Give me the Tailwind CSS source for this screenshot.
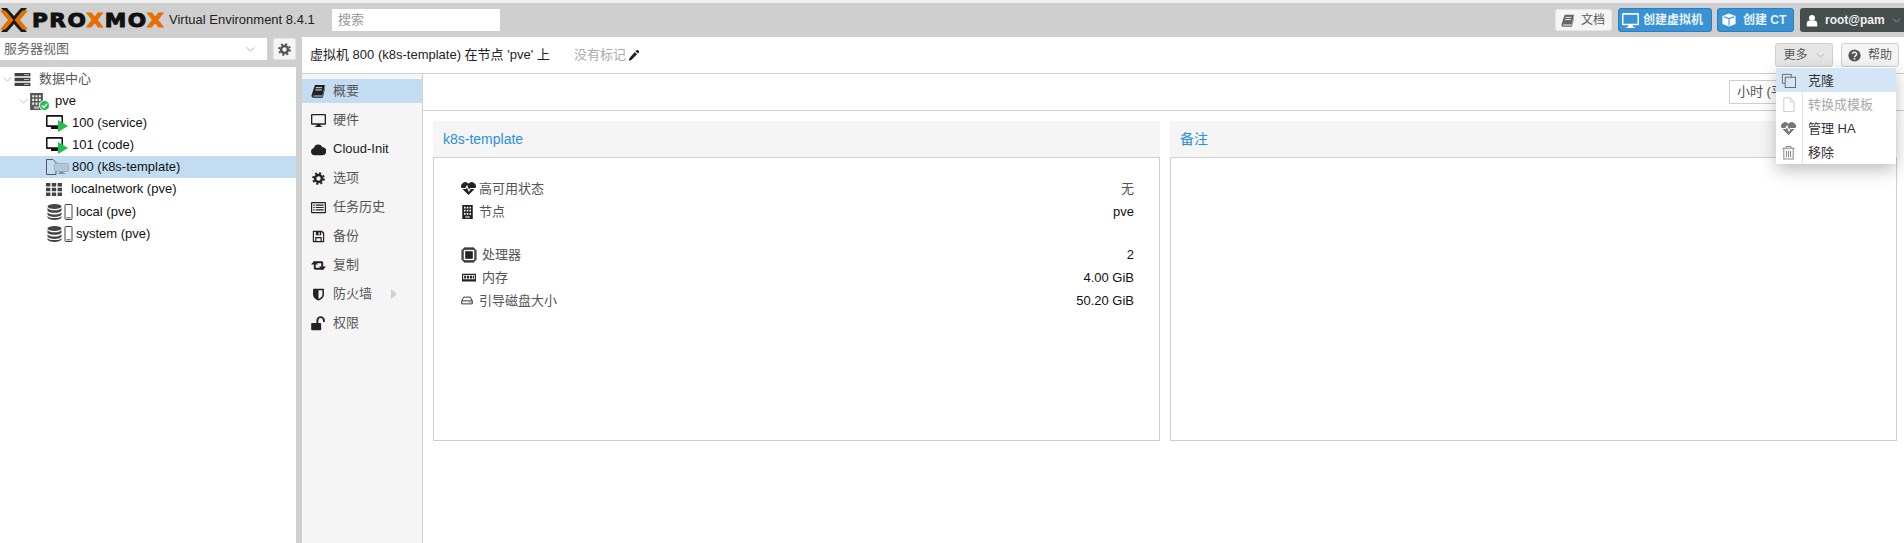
<!DOCTYPE html>
<html lang="zh-CN">
<head>
<meta charset="UTF-8" />
<title>pve - Proxmox Virtual Environment</title>
<script src="https://cdn.jsdelivr.net/npm/@tailwindcss/browser@4"></script>
</head>
<body class="w-[1904px] h-[543px] overflow-hidden bg-white text-[13px] text-[#111] font-['Liberation_Sans','Noto_Sans_CJK_SC',sans-serif]">

<!-- icon sheet -->
<svg class="hidden" xmlns="http://www.w3.org/2000/svg">
  <symbol id="i-chev" viewBox="0 0 10 6"><path d="M0.5 0.5 5 5 9.5 0.5" fill="none" stroke="currentColor" stroke-width="0.9"/></symbol>
  <symbol id="i-cog" viewBox="0 0 16 16"><circle cx="8" cy="8" r="4.2" fill="none" stroke="currentColor" stroke-width="3"/><circle cx="8" cy="8" r="6.6" fill="none" stroke="currentColor" stroke-width="2.4" stroke-dasharray="2.6 2.58"/></symbol>
  <symbol id="i-book" viewBox="0 0 16 16"><path d="M4.5 1H16l-3 12H3.200c-.9 0-1 .9-.3 1.200h10l3-10.400.4.800-3 11H2.600C1 15.600.2 14 .7 12.500z" fill="currentColor"/><path d="M5.500 4.200h7M5 6.800h7" stroke="#fff" stroke-width="1"/></symbol>
  <symbol id="i-desktop" viewBox="0 0 16 16"><path fill-rule="evenodd" d="M1 1h14a1 1 0 0 1 1 1v9.500a1 1 0 0 1-1 1H10l.4 1.500h1.600v1H4v-1h1.600l.4-1.500H1a1 1 0 0 1-1-1V2a1 1 0 0 1 1-1zM1.400 2.500v8.500h13.200V2.500z" fill="currentColor"/></symbol>
  <symbol id="i-cloud" viewBox="0 0 16 16"><path d="M4 14a3.900 3.900 0 0 1-.9-7.700A4.800 4.800 0 0 1 12 5.200a3.200 3.200 0 0 1 1 .5A4.200 4.200 0 0 1 12.500 14z" fill="currentColor"/></symbol>
  <symbol id="i-list" viewBox="0 0 16 16"><path fill-rule="evenodd" d="M1 2h14a1 1 0 0 1 1 1v10a1 1 0 0 1-1 1H1a1 1 0 0 1-1-1V3a1 1 0 0 1 1-1zM1.300 3.500v9.200h13.400V3.500z" fill="currentColor"/><path d="M2.500 5.500h1.500M5 5.500h8.500M2.500 8h1.500M5 8h8.500M2.500 10.500h1.500M5 10.500h8.500" stroke="currentColor" stroke-width="1.300"/></symbol>
  <symbol id="i-save" viewBox="0 0 16 16"><path fill-rule="evenodd" d="M1.500 1h11l2.500 2.500V14.500a.5.5 0 0 1-.5.5H1.500a.5.5 0 0 1-.5-.5V1.500a.5.5 0 0 1 .5-.5zM2.500 2.500v11h1.500V8.500h8v5h1.500V4.500L11.500 2.500h-.2v4H4.700v-4zM5.500 10v3.500h5V10zM8 3v2.500h1.800V3z" fill="currentColor"/></symbol>
  <symbol id="i-retweet" viewBox="0 0 16 16"><path d="M3.500 3 7.500 7H5v3.500h6.500l2 2H4.500A1.500 1.500 0 0 1 3 11V7H0zM12.500 13 8.500 9H11V5.500H4.500l-2-2h9A1.500 1.500 0 0 1 13 5v4h3z" fill="currentColor"/></symbol>
  <symbol id="i-shield" viewBox="0 0 16 16"><path fill-rule="evenodd" d="M2 1h12a.7.700 0 0 1 .7 .7v6.500c0 3.800-4.200 6.300-6.700 7.300-2.500-1-6.700-3.500-6.700-7.300V1.700A.7.700 0 0 1 2 1zM8 2.800v10.700c2-.9 4.800-2.900 4.800-5.300V2.800z" fill="currentColor"/></symbol>
  <symbol id="i-unlock" viewBox="0 0 16 16"><path d="M1 7.500h9a.8.800 0 0 1 .8.800v6a.8.800 0 0 1-.8.800H1a.8.800 0 0 1-.8-.8v-6A.8.800 0 0 1 1 7.500z" fill="currentColor"/><path d="M6.800 7.500V4.700a3.500 3.500 0 0 1 7 0v1.800" fill="none" stroke="currentColor" stroke-width="2"/></symbol>
  <symbol id="i-heart" viewBox="0 0 16 16"><path d="M8 15 1 8A4.300 4.300 0 0 1 8 3 4.300 4.300 0 0 1 15 8z" fill="currentColor"/><path d="M0 8h5l1.400-2.500 2 5 1.500-2.500H16" fill="none" stroke="#fff" stroke-width="1.200"/></symbol>
  <symbol id="i-node" viewBox="0 0 12 16"><path fill-rule="evenodd" d="M0 0h12v16H0zM2 2v2h1.800V2zM5.100 2v2h1.800V2zM8.200 2v2H10V2zM2 5.500v2h1.800v-2zM5.100 5.500v2h1.800v-2zM8.200 5.500v2H10v-2zM2 9v2h1.800V9zM5.100 9v2h1.800V9zM8.200 9v2H10V9z" fill="currentColor"/><path d="M3.500 12.500h5V15h-5z" fill="#fff" opacity=".55"/></symbol>
  <symbol id="i-cpu" viewBox="0 0 16 16"><rect x="2" y="2" width="12" height="12" rx="1" fill="#fff" stroke="currentColor" stroke-width="1.300"/><rect x="4.200" y="4.200" width="7.600" height="7.600" fill="currentColor"/><path d="M4 0v2M6 0v2M8 0v2M10 0v2M12 0v2M4 14v2M6 14v2M8 14v2M10 14v2M12 14v2M0 4h2M0 6h2M0 8h2M0 10h2M0 12h2M14 4h2M14 6h2M14 8h2M14 10h2M14 12h2" stroke="currentColor" stroke-width="1.100"/></symbol>
  <symbol id="i-mem" viewBox="0 0 16 16"><path fill-rule="evenodd" d="M0 3h16v9H0zM1.300 4.500V9.500h13.400V4.500z" fill="currentColor"/><path d="M2.500 5.500h2.300v3H2.500zM5.800 5.500h2.300v3H5.800zM9.100 5.500h2.300v3H9.100zM12.300 5.500h1.500v3h-1.500zM2 10.500h12V11H2z" fill="currentColor"/></symbol>
  <symbol id="i-hdd" viewBox="0 0 16 16"><path d="M3.500 3.500h9l2.500 5v4H1v-4zM1 8.500h14" fill="none" stroke="currentColor" stroke-width="1.200"/><path d="M10.500 10.500h1M12.700 10.500h1" stroke="currentColor" stroke-width="1"/></symbol>
  <symbol id="i-clone" viewBox="0 0 16 16"><path d="M11 4.500V1.500H1.500V11h3" fill="none" stroke="currentColor" stroke-width="1"/><rect x="4.500" y="4.500" width="11" height="11" fill="none" stroke="currentColor" stroke-width="1"/></symbol>
  <symbol id="i-file" viewBox="0 0 16 16"><path d="M3 1h7l4 4v10.500H3zM10 1v4h4" fill="none" stroke="currentColor" stroke-width="1"/></symbol>
  <symbol id="i-trash" viewBox="0 0 16 16"><path d="M1.500 3.500h13M3 3.500V15h10V3.500M5.500 3.500V1.500h5v2M5.800 6v7M8 6v7M10.200 6v7" fill="none" stroke="currentColor" stroke-width="1.100"/></symbol>
  <symbol id="i-help" viewBox="0 0 16 16"><circle cx="8" cy="8" r="7.500" fill="currentColor"/><path d="M5.400 6.200A2.600 2.300 0 1 1 9.400 8.200c-1 .6-1.400 1-1.400 2" fill="none" stroke="#f5f5f5" stroke-width="1.800"/><path d="M7 11.200h2v2H7z" fill="#f5f5f5"/></symbol>
  <symbol id="i-cube" viewBox="0 0 16 16"><path d="M8 .5 15.500 3.300v9.400L8 15.500.5 12.700V3.300z" fill="currentColor"/><path d="M2 4.200 8 6.400l6-2.200M8 6.400v8" fill="none" stroke="#3892d4" stroke-width="1.200"/></symbol>
  <symbol id="i-user" viewBox="0 0 16 16"><circle cx="8" cy="4.500" r="4" fill="currentColor"/><path d="M1 16v-4C1 9.500 2.800 8.200 4.500 8c1 .9 6 .9 7 0 1.700.2 3.500 1.500 3.500 4v4z" fill="currentColor"/></symbol>
  <symbol id="i-pencil" viewBox="0 0 16 16"><path d="M11.500 1.500a1.500 1.500 0 0 1 2 0l1 1a1.500 1.500 0 0 1 0 2L13 6 10 3zM9 4l3 3-7.500 7.500L1 15.500l1-3.500z" fill="currentColor"/></symbol>
  <symbol id="i-dc" viewBox="0 0 17 14"><path d="M0 0h17v3.600H0zM0 5.200h17v3.600H0zM0 10.400h17V14H0z" fill="#3f3f3f"/><path d="M10 1.800h5.500M10 7h5.500M10 12.200h5.500" stroke="#c9c9c9" stroke-width="1"/></symbol>
  <symbol id="i-vmrun" viewBox="0 0 22 17"><path fill-rule="evenodd" d="M1 0h15a1 1 0 0 1 1 1v10a1 1 0 0 1-1 1h-4v2H5v-2H1a1 1 0 0 1-1-1V1a1 1 0 0 1 1-1zM1.500 1.700v8.600h14V1.700z" fill="#111"/><path d="M12 5 22 11 12 17z" fill="#21bf4b"/></symbol>
  <symbol id="i-tpl" viewBox="0 0 23 16"><path d="M.5.500h6.500l3.500 3.500M.5.500v15h9.500V12" fill="none" stroke="#555" stroke-width="1"/><rect x="8.500" y="4.500" width="14" height="8" rx="1" fill="#b3c6d4" stroke="#8aa0b0" stroke-width=".6"/><path d="M13.500 12.500h4v1.500h1.500v1h-7v-1h1.500z" fill="#7b91a2"/></symbol>
  <symbol id="i-sdn" viewBox="0 0 16 13"><path d="M0 0h4.400v3.400H0zM5.800 0h4.400v3.400H5.800zM11.600 0H16v3.400h-4.400zM0 4.800h4.400v3.400H0zM5.800 4.800h4.400v3.400H5.800zM11.600 4.800H16v3.400h-4.400zM0 9.600h4.400V13H0zM5.800 9.600h4.400V13H5.800zM11.600 9.600H16V13h-4.400z" fill="#444"/></symbol>
  <symbol id="i-store" viewBox="0 0 26 16"><ellipse cx="7.500" cy="2.500" rx="7" ry="2.500" fill="#444"/><path d="M.5 4c1 1.700 3.500 2.300 7 2.300s6-.6 7-2.300v2.400C14 8 11 8.700 7.500 8.700S1 8 .5 6.400zM.5 8.200c1 1.700 3.500 2.300 7 2.300s6-.6 7-2.300v2.400c-.5 1.600-3.500 2.300-7 2.300s-6.500-.7-7-2.300zM.5 12c1 1.700 3.500 2 7 2s6-.3 7-2v1.500c-.5 1.600-3.500 2.500-7 2.500s-6.500-.9-7-2.500z" fill="#444"/><rect x="18" y=".5" width="7" height="15" rx=".8" fill="none" stroke="#444" stroke-width="1"/><path d="M19.500 13.800h4" stroke="#444" stroke-width="1"/></symbol>
</svg>

<!-- top bar -->
<header class="h-[37px] border-t-[3px] border-[#eeeeee] bg-[#cfcfcf] flex items-center">
  <div class="flex items-center w-[169px] h-full">
    <svg class="w-[28px] h-[26px] shrink-0" viewBox="0 0 28 26"><path d="M1 1h6l7 8 7-8h6L17 13 27 25h-6l-7-8-7 8H1l10-12z" fill="#1a1a1a"/><path d="M0 3.500h5.500l8 9.500-8 9.500H0L8 13zM28 3.500h-5.500l-8 9.500 8 9.500H28L20 13z" fill="#e57000"/></svg>
    <span class="ml-[4px] inline-block origin-left scale-x-[1.08] whitespace-nowrap font-['DejaVu_Sans'] font-bold text-[20px] tracking-[1.4px] leading-none text-[#111] [-webkit-text-stroke:1px_#111]">PRO<span class="text-[#e57000] [-webkit-text-stroke:1px_#e57000]">X</span>MO<span class="text-[#e57000] [-webkit-text-stroke:1px_#e57000]">X</span></span>
  </div>
  <span class="w-[163px] whitespace-nowrap text-[#222]">Virtual Environment 8.4.1</span>
  <div class="w-[168px] h-[22px] bg-white px-[6px] flex items-center text-[#999]">搜索</div>
  <div class="flex-1"></div>
  <button class="w-[57px] h-[22px] mr-[6px] bg-[#f5f5f5] border border-[#e5e5e5] rounded-[3px] flex items-center pl-[5px] gap-[7px] text-[#555] text-[12px]"><svg class="w-[13px] h-[13px] text-[#666]"><use href="#i-book"/></svg>文档</button>
  <button class="w-[94px] h-[24px] mr-[5px] bg-[#3892d4] border border-[#2b7fbc] rounded-[3px] flex items-center pl-[3px] gap-[4px] text-[#eaf4fb] text-[12px] font-bold"><svg class="w-[17px] h-[17px] text-white"><use href="#i-desktop"/></svg>创建虚拟机</button>
  <button class="w-[77px] h-[24px] mr-[6px] bg-[#3892d4] border border-[#2b7fbc] rounded-[3px] flex items-center pl-[4px] gap-[7px] text-[#eaf4fb] text-[12px] font-bold"><svg class="w-[14px] h-[14px] text-white"><use href="#i-cube"/></svg>创建 CT</button>
  <button class="w-[104px] h-[24px] bg-[#464d4d] rounded-l-[3px] flex items-center pl-[6px] text-[#f2f2f2] text-[12px] font-bold"><svg class="w-[12px] h-[13px] text-white"><use href="#i-user"/></svg><span class="ml-[7px]">root@pam</span><svg class="w-[9px] h-[5px] ml-[7px] text-[#aaa]"><use href="#i-chev"/></svg></button>
</header>

<div class="flex h-[506px] bg-[#cfcfcf]">
  <!-- resource tree -->
  <aside class="w-[296px] shrink-0 flex flex-col pt-[1px]">
    <div class="flex justify-between h-[22px]">
      <div class="w-[267px] bg-white flex items-center justify-between pl-[4px] pr-[12px] text-[#666]">服务器视图<svg class="w-[9px] h-[5px] text-[#999]"><use href="#i-chev"/></svg></div>
      <button class="w-[23px] bg-[#f5f5f5] rounded-[2px] border border-[#e5e5e5] flex items-center justify-center"><svg class="w-[13px] h-[13px] text-[#555]"><use href="#i-cog"/></svg></button>
    </div>
    <div class="mt-[7px] flex-1 bg-white pt-[1px]">
      <div class="h-[22px] flex items-center pl-[3px]"><svg class="w-[9px] h-[5px] text-[#aaa]"><use href="#i-chev"/></svg><svg class="w-[17px] h-[13px] ml-[2px]"><use href="#i-dc"/></svg><span class="ml-[8px] text-[#555]">数据中心</span></div>
      <div class="h-[22px] flex items-center pl-[19px]"><svg class="w-[9px] h-[5px] text-[#aaa]"><use href="#i-chev"/></svg>
        <span class="relative w-[20px] h-[17px] ml-[2px]"><svg class="w-[13px] h-[17px] text-[#555]"><use href="#i-node"/></svg><span class="absolute right-0 bottom-[-1px] w-[11px] h-[11px] rounded-full bg-[#21bf4b] border border-white flex items-center justify-center"><svg class="w-[7px] h-[7px]" viewBox="0 0 8 8"><path d="M1 4 3.300 6.300 7 1.800" fill="none" stroke="#fff" stroke-width="1.500"/></svg></span></span>
        <span class="ml-[5px]">pve</span></div>
      <div class="h-[22px] flex items-center pl-[46px]"><svg class="w-[22px] h-[17px]"><use href="#i-vmrun"/></svg><span class="ml-[4px]">100 (service)</span></div>
      <div class="h-[22px] flex items-center pl-[46px]"><svg class="w-[22px] h-[17px]"><use href="#i-vmrun"/></svg><span class="ml-[4px]">101 (code)</span></div>
      <div class="h-[22px] flex items-center pl-[46px] bg-[#c2ddf2]"><svg class="w-[23px] h-[16px]"><use href="#i-tpl"/></svg><span class="ml-[3px]">800 (k8s-template)</span></div>
      <div class="h-[22px] flex items-center pl-[46px]"><svg class="w-[16px] h-[13px]"><use href="#i-sdn"/></svg><span class="ml-[9px]">localnetwork (pve)</span></div>
      <div class="h-[23px] flex items-center pl-[47px]"><svg class="w-[26px] h-[16px]"><use href="#i-store"/></svg><span class="ml-[3px]">local (pve)</span></div>
      <div class="h-[22px] flex items-center pl-[47px]"><svg class="w-[26px] h-[16px]"><use href="#i-store"/></svg><span class="ml-[3px]">system (pve)</span></div>
    </div>
  </aside>

  <!-- main panel -->
  <main class="relative ml-[6px] flex-1 bg-white flex flex-col">
    <div class="h-[37px] border-b border-[#cfcfcf] flex items-center pl-[8px] pr-[5px] shrink-0">
      <span class="text-[#222] w-[264px] whitespace-nowrap">虚拟机 800 (k8s-template) 在节点 'pve' 上</span>
      <span class="text-[#aaa]">没有标记</span>
      <svg class="w-[12px] h-[12px] ml-[2px] text-[#222]"><use href="#i-pencil"/></svg>
      <div class="flex-1"></div>
      <button class="w-[58px] h-[24px] mr-[8px] bg-[#e6e6e6] border border-[#cfcfcf] rounded-[3px] flex items-center justify-center gap-[8px] text-[#555] text-[12px]">更多<svg class="w-[9px] h-[5px] text-[#aaa]"><use href="#i-chev"/></svg></button>
      <button class="w-[58px] h-[24px] bg-[#f5f5f5] border border-[#cfcfcf] rounded-[3px] flex items-center justify-center gap-[7px] text-[#555] text-[12px]"><svg class="w-[13px] h-[13px] text-[#555]"><use href="#i-help"/></svg>帮助</button>
    </div>

    <div class="flex flex-1 min-h-0">
      <!-- sub nav -->
      <nav class="w-[121px] shrink-0 bg-[#f5f5f5] border-r border-[#cfcfcf] pt-[5px] flex flex-col gap-[5px] text-[#555]">
        <a class="h-6 flex items-center pl-[9px] bg-[#c2ddf2]"><svg class="w-[14px] h-[14px] text-[#222]"><use href="#i-book"/></svg><span class="ml-[8px]">概要</span></a>
        <a class="h-6 flex items-center pl-[9px]"><svg class="w-[15px] h-[15px] text-[#222]"><use href="#i-desktop"/></svg><span class="ml-[7px]">硬件</span></a>
        <a class="h-6 flex items-center pl-[9px]"><svg class="w-[15px] h-[15px] text-[#222]"><use href="#i-cloud"/></svg><span class="ml-[7px] text-[#222]">Cloud-Init</span></a>
        <a class="h-6 flex items-center pl-[10px]"><svg class="w-[13px] h-[13px] text-[#222]"><use href="#i-cog"/></svg><span class="ml-[8px]">选项</span></a>
        <a class="h-6 flex items-center pl-[9px]"><svg class="w-[15px] h-[15px] text-[#222]"><use href="#i-list"/></svg><span class="ml-[7px]">任务历史</span></a>
        <a class="h-6 flex items-center pl-[10px]"><svg class="w-[13px] h-[13px] text-[#222]"><use href="#i-save"/></svg><span class="ml-[8px]">备份</span></a>
        <a class="h-6 flex items-center pl-[9px]"><svg class="w-[15px] h-[15px] text-[#222]"><use href="#i-retweet"/></svg><span class="ml-[7px]">复制</span></a>
        <a class="h-6 flex items-center pl-[10px]"><svg class="w-[13px] h-[13px] text-[#222]"><use href="#i-shield"/></svg><span class="ml-[8px]">防火墙</span><span class="ml-[19px] border-y-[5px] border-l-[6px] border-y-transparent border-l-[#cfcfcf]"></span></a>
        <a class="h-6 flex items-center pl-[9px]"><svg class="w-[15px] h-[15px] text-[#222]"><use href="#i-unlock"/></svg><span class="ml-[7px]">权限</span></a>
      </nav>

      <section class="flex-1 flex flex-col min-w-0">
        <div class="h-[37px] border-b border-[#cfcfcf] shrink-0 flex items-center justify-end pr-[8px]">
          <div class="w-[167px] h-[24px] border border-[#cfcfcf] pl-[7px] flex items-center whitespace-nowrap text-[#555]">小时 (平均)</div>
        </div>
        <div class="flex gap-[10px] pl-[10px] pr-[7px] pt-[10px]">
          <div class="w-[727px] flex flex-col">
            <div class="h-[36px] bg-[#f5f5f5] pl-[10px] flex items-center text-[14px] text-[#2a8fdc]">k8s-template</div>
            <div class="h-[284px] border border-[#cfcfcf] pl-[27px] pr-[25px] pt-[19px]">
              <div class="h-[23px] flex items-center"><svg class="w-[15px] h-[15px] text-[#222]"><use href="#i-heart"/></svg><span class="ml-[3px] text-[#555]">高可用状态</span><span class="ml-auto text-[#555]">无</span></div>
              <div class="h-[23px] flex items-center"><svg class="w-[11px] h-[14px] text-[#222] ml-[1px]"><use href="#i-node"/></svg><span class="ml-[6px] text-[#555]">节点</span><span class="ml-auto">pve</span></div>
              <div class="h-[20px]"></div>
              <div class="h-[23px] flex items-center"><svg class="w-[16px] h-[16px] text-[#222]"><use href="#i-cpu"/></svg><span class="ml-[5px] text-[#555]">处理器</span><span class="ml-auto">2</span></div>
              <div class="h-[23px] flex items-center"><svg class="w-[16px] h-[14px] text-[#222]"><use href="#i-mem"/></svg><span class="ml-[5px] text-[#555]">内存</span><span class="ml-auto">4.00 GiB</span></div>
              <div class="h-[23px] flex items-center"><svg class="w-[12px] h-[13px] text-[#222]"><use href="#i-hdd"/></svg><span class="ml-[6px] text-[#555]">引导磁盘大小</span><span class="ml-auto">50.20 GiB</span></div>
            </div>
          </div>
          <div class="flex-1 flex flex-col">
            <div class="h-[36px] bg-[#f5f5f5] pl-[10px] flex items-center text-[14px] text-[#2a8fdc]">备注</div>
            <div class="h-[284px] border border-[#cfcfcf]"></div>
          </div>
        </div>
      </section>
    </div>

    <!-- 更多 menu -->
    <div class="absolute left-[1474px] top-[30px] w-[120px] h-[97px] bg-white shadow-[0_6px_16px_rgba(0,0,0,0.25)] pt-[1px] text-[#333]">
      <div class="absolute left-[26px] top-0 bottom-0 w-px bg-[#e2e2e2]"></div>
      <div class="relative h-[24px] bg-[#d4e6f5] flex items-center"><svg class="ml-[5px] w-[15px] h-[15px] text-[#666]"><use href="#i-clone"/></svg><span class="ml-[12px] pt-px">克隆</span></div>
      <div class="relative h-[24px] flex items-center text-[#aaa]"><svg class="ml-[5px] w-[15px] h-[15px] text-[#ccc]"><use href="#i-file"/></svg><span class="ml-[12px] pt-px">转换成模板</span></div>
      <div class="relative h-[24px] flex items-center"><svg class="ml-[5px] w-[15px] h-[15px] text-[#777]"><use href="#i-heart"/></svg><span class="ml-[12px] pt-px">管理 HA</span></div>
      <div class="relative h-[24px] flex items-center"><svg class="ml-[5px] w-[15px] h-[15px] text-[#888]"><use href="#i-trash"/></svg><span class="ml-[12px] pt-px">移除</span></div>
    </div>
  </main>
</div>
</body>
</html>
